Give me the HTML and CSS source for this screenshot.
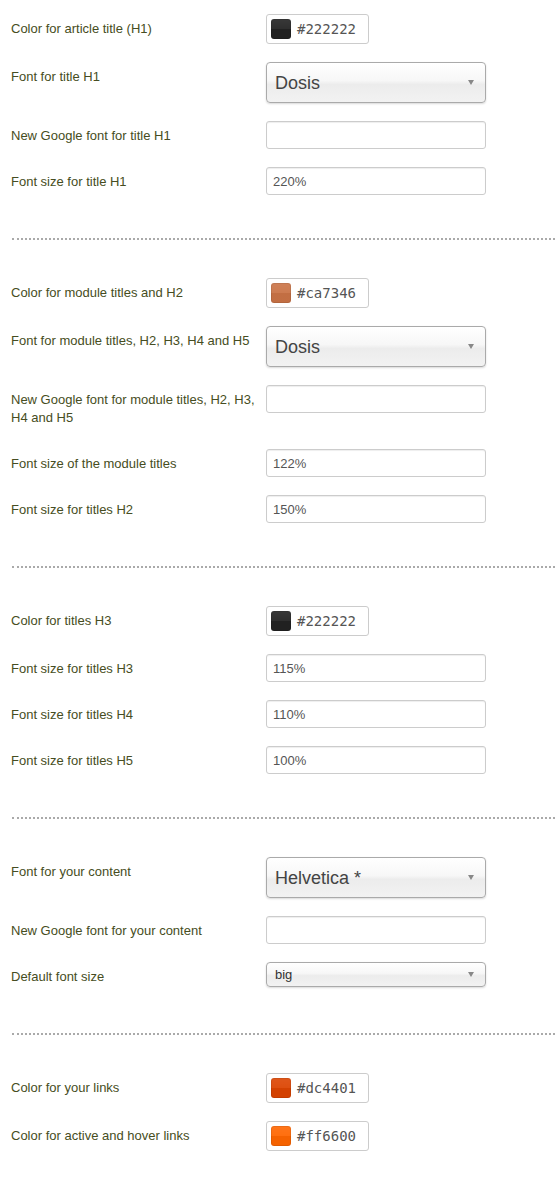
FILE: index.html
```html
<!DOCTYPE html>
<html lang="en">
<head>
  <meta charset="UTF-8">
  <title>Template fonts and colors</title>
  <link rel="stylesheet" href="styles.css">
</head>
<body>

  <form class="settings">

    <!-- H1 -->
    <div class="section">
      <div class="row">
        <label>Color for article title (H1)</label>
        <div class="color-box"><span class="swatch" style="background-color: #222222;"></span>#222222</div>
      </div>
      <div class="row">
        <label>Font for title H1</label>
        <div class="select-wrap big"><select><option>Dosis</option></select></div>
      </div>
      <div class="row">
        <label>New Google font for title H1</label>
        <input type="text" value="">
      </div>
      <div class="row">
        <label>Font size for title H1</label>
        <input type="text" value="220%">
      </div>
    </div>

    <!-- module titles / H2 -->
    <div class="section">
      <div class="row">
        <label>Color for module titles and H2</label>
        <div class="color-box"><span class="swatch" style="background-color: #ca7346;"></span>#ca7346</div>
      </div>
      <div class="row">
        <label>Font for module titles, H2, H3, H4 and H5</label>
        <div class="select-wrap big"><select><option>Dosis</option></select></div>
      </div>
      <div class="row">
        <label>New Google font for module titles, H2, H3, H4 and H5</label>
        <input type="text" value="">
      </div>
      <div class="row">
        <label>Font size of the module titles</label>
        <input type="text" value="122%">
      </div>
      <div class="row">
        <label>Font size for titles H2</label>
        <input type="text" value="150%">
      </div>
    </div>

    <!-- H3 - H5 -->
    <div class="section">
      <div class="row">
        <label>Color for titles H3</label>
        <div class="color-box"><span class="swatch" style="background-color: #222222;"></span>#222222</div>
      </div>
      <div class="row">
        <label>Font size for titles H3</label>
        <input type="text" value="115%">
      </div>
      <div class="row">
        <label>Font size for titles H4</label>
        <input type="text" value="110%">
      </div>
      <div class="row">
        <label>Font size for titles H5</label>
        <input type="text" value="100%">
      </div>
    </div>

    <!-- content -->
    <div class="section">
      <div class="row">
        <label>Font for your content</label>
        <div class="select-wrap big"><select><option>Helvetica *</option></select></div>
      </div>
      <div class="row">
        <label>New Google font for your content</label>
        <input type="text" value="">
      </div>
      <div class="row">
        <label>Default font size</label>
        <div class="select-wrap small"><select><option>big</option></select></div>
      </div>
    </div>

    <!-- links -->
    <div class="section last">
      <div class="row">
        <label>Color for your links</label>
        <div class="color-box"><span class="swatch" style="background-color: #dc4401;"></span>#dc4401</div>
      </div>
      <div class="row">
        <label>Color for active and hover links</label>
        <div class="color-box"><span class="swatch" style="background-color: #ff6600;"></span>#ff6600</div>
      </div>
    </div>

  </form>

</body>
</html>
```

FILE: styles.css
```css
body {
  margin: 0;
  background: #fff;
  font-family: "Liberation Sans", Arial, sans-serif;
  font-size: 13px;
}
.settings {
  padding: 14px 0 0 11px;
}
.section {
  padding-bottom: 25px;
  border-bottom: 2px dotted #aaa;
  margin-bottom: 38px;
  margin-left: 1px;
}
.section.last {
  border-bottom: none;
}
.row {
  display: flex;
  align-items: flex-start;
  margin-bottom: 18px;
  margin-left: -1px;
}
.row label {
  width: 248px;
  margin-right: 7px;
  padding: 6px 0 4px;
  line-height: 18px;
  color: #464d22;
}
input[type="text"] {
  box-sizing: border-box;
  width: 220px;
  height: 28px;
  margin: 0;
  padding: 4px 6px;
  border: 1px solid #ccc;
  border-radius: 3px;
  box-shadow: inset 0 1px 1px rgba(0,0,0,0.07);
  font-family: "Liberation Sans", Arial, sans-serif;
  font-size: 13px;
  color: #555;
}
.color-box {
  box-sizing: border-box;
  display: flex;
  align-items: center;
  width: 103px;
  height: 30px;
  padding: 0 4px;
  border: 1px solid #ccc;
  border-radius: 3px;
  background: #fff;
  font-family: "DejaVu Sans Mono", monospace;
  font-size: 14px;
  color: #555;
}
.swatch {
  width: 20px;
  height: 20px;
  margin-right: 6px;
  border-radius: 3px;
  background-image: linear-gradient(to bottom, rgba(255,255,255,0.1) 0%, rgba(255,255,255,0.06) 50%, rgba(0,0,0,0.04) 50%, rgba(0,0,0,0.04) 100%);
  box-shadow: inset 0 0 0 1px rgba(0,0,0,0.08);
}
.select-wrap {
  position: relative;
  width: 220px;
}
.select-wrap select {
  -webkit-appearance: none;
  appearance: none;
  box-sizing: border-box;
  width: 100%;
  margin: 0;
  border: 1px solid #aaa;
  border-radius: 4px;
  background: linear-gradient(to bottom, #fff 0%, #f7f7f7 45%, #ececec 55%, #f2f2f2 100%);
  box-shadow: 0 1px 2px rgba(0,0,0,0.15);
  font-family: "Liberation Sans", Arial, sans-serif;
  color: #444;
}
.select-wrap.big select {
  height: 41px;
  padding: 0 8px;
  font-size: 18px;
}
.select-wrap.small select {
  height: 25px;
  padding: 0 8px;
  font-size: 13px;
  color: #333;
}
.select-wrap::after {
  content: "";
  position: absolute;
  right: 12px;
  border-left: 3px solid transparent;
  border-right: 3px solid transparent;
  border-top: 5px solid #888;
  pointer-events: none;
}
.select-wrap.big::after {
  top: 18px;
}
.select-wrap.small::after {
  top: 10px;
}
```
